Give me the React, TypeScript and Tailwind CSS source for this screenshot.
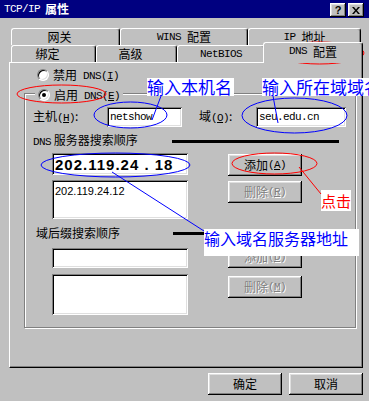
import React from 'react';

const raised =
  'bg-[#c0c0c0] shadow-[inset_-1px_-1px_0_#000,inset_1px_1px_0_#fff,inset_-2px_-2px_0_#808080,inset_2px_2px_0_#dfdfdf]';
const sunken =
  'bg-white shadow-[inset_1px_1px_0_#808080,inset_-1px_-1px_0_#fff,inset_2px_2px_0_#000,inset_-2px_-2px_0_#dfdfdf]';

const Lat = ({ children }: { children: React.ReactNode }) => (
  <span className="font-['Liberation_Mono',monospace] text-[11px] tracking-[-0.6px]">{children}</span>
);

const Key = ({ k }: { k: string }) => (
  <Lat>
    (<u>{k}</u>)
  </Lat>
);

function Radio({ on }: { on?: boolean }) {
  return (
    <span className="flex items-center justify-center w-[12px] h-[12px] rounded-full bg-white border border-[#808080] border-r-white border-b-white shadow-[inset_1px_1px_0_#000,inset_-1px_-1px_0_#dfdfdf]">
      {on && <span className="w-[4px] h-[4px] rounded-full bg-black" />}
    </span>
  );
}

function Btn({ children, className = '', disabled }: { children: React.ReactNode; className?: string; disabled?: boolean }) {
  return (
    <div
      className={`flex items-center justify-center ${raised} ${
        disabled ? 'text-[#808080] [text-shadow:1px_1px_0_#fff]' : 'text-black'
      } ${className}`}
    >
      {children}
    </div>
  );
}

function Tab({ children, className = '' }: { children: React.ReactNode; className?: string }) {
  return (
    <div
      className={`flex items-center justify-center bg-[#c0c0c0] border-l border-t border-r border-white border-r-black rounded-tl-[3px] rounded-tr-[3px] shadow-[inset_-1px_0_0_#808080] ${className}`}
    >
      {children}
    </div>
  );
}

function TitleBar() {
  return (
    <div className="flex items-start h-[18px] bg-[#000080] pl-[4px] pr-[5px] text-white">
      <div className="flex items-center gap-[5px] h-[18px]">
        <Lat>TCP/IP</Lat>
        <span className="font-bold">属性</span>
      </div>
      <div className="ml-auto mt-[3px] flex gap-[2px]">
        <div className={`w-[16px] h-[14px] flex items-center justify-center ${raised}`}>
          <span className="font-['Liberation_Sans',sans-serif] font-bold text-[11px] text-black">?</span>
        </div>
        <div className={`w-[16px] h-[14px] flex items-center justify-center ${raised}`}>
          <svg width="8" height="7" viewBox="0 0 8 7">
            <path d="M0 0h2l2 2.5L6 0h2L5 3.5 8 7H6L4 4.5 2 7H0l3-3.5z" fill="#000" />
          </svg>
        </div>
      </div>
    </div>
  );
}

function Tabs() {
  return (
    <div>
      <div className="flex h-[17px] pl-[2px]">
        <Tab className="w-[109px] pr-[12px]">网关</Tab>
        <Tab className="w-[128px] gap-[6px]">
          <Lat>WINS</Lat>配置
        </Tab>
        <Tab className="w-[113px] gap-[6px]">
          <Lat>IP</Lat>地址
        </Tab>
      </div>
      <div className="flex h-[17px] pl-[2px] items-end">
        <Tab className="w-[85px] h-[17px] pr-[12px]">绑定</Tab>
        <Tab className="w-[81px] h-[17px] pr-[12px]">高级</Tab>
        <Tab className="w-[88px] h-[17px]">
          <Lat>NetBIOS</Lat>
        </Tab>
        <Tab className="relative z-10 -ml-[2px] w-[100px] h-[21px] -mb-[1px] pb-[3px] gap-[6px]">
          <Lat>DNS</Lat>配置
        </Tab>
      </div>
    </div>
  );
}

function Panel() {
  return (
    <div className="h-[306px] border border-white border-r-black border-b-black shadow-[inset_-1px_-1px_0_#808080]">
      <div className="mt-[4px] ml-[27px] h-[16px] flex items-center gap-[4px]">
        <Radio />
        <span>禁用</span>
        <span className="ml-[2px]">
          <Lat>DNS</Lat>
          <Key k="I" />
        </span>
      </div>

      <div className="mt-[10px] ml-[14px] w-[332px] h-[235px] border border-[#808080] shadow-[inset_1px_1px_0_#fff,1px_1px_0_#fff]">
        <div className="-mt-[7px] ml-[10px] px-[3px] w-fit h-[16px] flex items-center gap-[4px] bg-[#c0c0c0]">
          <Radio on />
          <span>启用</span>
          <span className="ml-[2px]">
            <Lat>DNS</Lat>
            <Key k="E" />
          </span>
        </div>

        <div className="mt-[4px] h-[20px] flex items-center pl-[8px]">
          <span className="w-[74px]">
            主机<Key k="H" />:
          </span>
          <div className={`w-[75px] h-[20px] flex items-center pl-[3px] ${sunken}`}>
            <Lat>netshow</Lat>
          </div>
          <span className="ml-[17px] w-[57px]">
            域<Key k="O" />:
          </span>
          <div className={`w-[90px] h-[20px] flex items-center pl-[3px] ${sunken}`}>
            <Lat>seu.edu.cn</Lat>
          </div>
        </div>

        <div className="mt-[7px] h-[14px] flex items-center pl-[8px]">
          <span className="w-[139px] whitespace-nowrap">
            <Lat>DNS</Lat> 服务器搜索顺序
          </span>
          <div className="w-[167px] h-[3px] bg-black" />
        </div>

        <div className="mt-[5px] flex pl-[27px]">
          <div className="w-[136px]">
            <div className={`h-[22px] flex items-center pl-[3px] ${sunken}`}>
              <span className="font-['Liberation_Sans',sans-serif] font-bold text-[15px] tracking-[1px] whitespace-pre">
                202.119.24 . 18
              </span>
            </div>
            <div className={`mt-[5px] h-[39px] pl-[3px] pt-[4px] ${sunken}`}>
              <span className="font-['Liberation_Sans',sans-serif] text-[11px]">202.119.24.12</span>
            </div>
          </div>
          <div className="ml-[40px] w-[74px]">
            <Btn className="mt-[1px] h-[22px]">
              添加<Key k="A" />
            </Btn>
            <Btn className="mt-[5px] h-[22px]" disabled>
              删除<Key k="R" />
            </Btn>
          </div>
        </div>

        <div className="mt-[7px] h-[14px] flex items-center pl-[11px]">
          <span className="w-[137px] whitespace-nowrap">域后缀搜索顺序</span>
          <div className="w-[166px] h-[3px] bg-black" />
        </div>

        <div className="mt-[6px] flex pl-[27px]">
          <div className="w-[136px]">
            <div className={`mt-[2px] h-[20px] ${sunken}`} />
            <div className={`mt-[6px] h-[41px] ${sunken}`} />
          </div>
          <div className="ml-[40px] w-[74px]">
            <Btn className="h-[22px]" disabled>
              添加<Key k="D" />
            </Btn>
            <Btn className="mt-[8px] h-[22px]" disabled>
              删除<Key k="M" />
            </Btn>
          </div>
        </div>
      </div>
    </div>
  );
}

function Annotations() {
  return (
    <>
      <div className="absolute left-[147px] top-[78px] w-[87px] h-[18px] bg-white text-[#0000ff] text-[17px] leading-[18px] whitespace-nowrap">
        输入本机名
      </div>
      <div className="absolute left-[262px] top-[78px] h-[18px] pr-[2px] bg-white text-[#0000ff] text-[17px] leading-[18px] whitespace-nowrap">
        输入所在域域名
      </div>
      <div className="absolute left-[204px] top-[229px] w-[155px] h-[27px] bg-white text-[#0000ff] text-[16px] leading-[18px] whitespace-nowrap">
        输入域名服务器地址
      </div>
      <div className="absolute left-[321px] top-[190px] w-[30px] h-[21px] bg-white text-[#ff0000] text-[15px] leading-[21px] text-center whitespace-nowrap">
        点击
      </div>
      <svg className="absolute inset-0 pointer-events-none" width="369" height="401" viewBox="0 0 369 401" fill="none">
        <g stroke="#ff0000" strokeWidth="1">
          <ellipse cx="319.5" cy="53" rx="44.5" ry="11" />
          <ellipse cx="61.5" cy="94" rx="44.5" ry="9" />
          <ellipse cx="274.5" cy="163.5" rx="42.5" ry="10.5" />
          <line x1="299" y1="167" x2="321" y2="194" />
        </g>
        <g stroke="#0000ff" strokeWidth="1">
          <ellipse cx="130.5" cy="115" rx="36.5" ry="13" />
          <ellipse cx="294.5" cy="115.5" rx="52.5" ry="17.5" />
          <ellipse cx="115.5" cy="165" rx="74.5" ry="12" />
          <line x1="161" y1="96" x2="152" y2="120" />
          <line x1="273" y1="96" x2="278" y2="123" />
          <line x1="112" y1="172" x2="204" y2="231" />
        </g>
      </svg>
    </>
  );
}

export default function App() {
  return (
    <div className="relative w-[369px] h-[401px] overflow-hidden bg-[#c0c0c0] text-black font-['Noto_Sans_CJK_SC','Liberation_Sans',sans-serif] text-[12px] leading-none select-none">
      <TitleBar />
      <div className="ml-[9px] mt-[10px] w-[354px]">
        <Tabs />
        <Panel />
      </div>
      <div className="mt-[5px] flex justify-end gap-[7px] pr-[6px]">
        <Btn className="w-[74px] h-[22px]">确定</Btn>
        <Btn className="w-[74px] h-[22px]">取消</Btn>
      </div>
      <Annotations />
    </div>
  );
}
